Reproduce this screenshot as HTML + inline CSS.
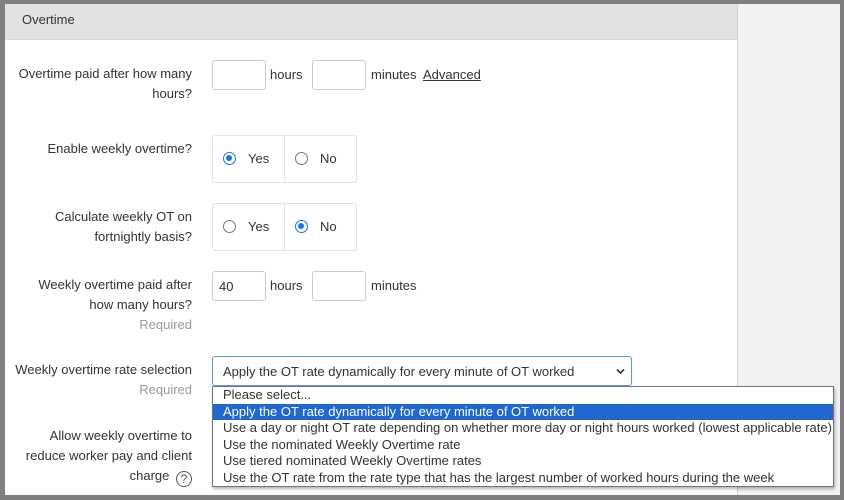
<!DOCTYPE html>
<html><head><style>
*{margin:0;padding:0;box-sizing:border-box}
body{width:844px;height:500px;background:#7f7f7f;position:relative;overflow:hidden;font-family:"Liberation Sans",Arial,sans-serif;font-size:13px;color:#333}
.main{position:absolute;left:5px;top:4px;width:732px;height:491px;background:#fff}
.side{position:absolute;left:737px;top:4px;width:103px;height:491px;background:#f1f2f4;border-left:1px solid #d0d0d0}
.hdr{position:absolute;left:5px;top:4px;width:732px;height:36px;background:#e2e2e2;border-bottom:1px solid #d8d8d8}
.hdr span{position:absolute;left:17px;top:8px;font-size:13px}
.a{position:absolute;white-space:nowrap}
.lbl{position:absolute;right:652px;text-align:right;line-height:20px}
.req{color:#999}
.in{position:absolute;width:54px;height:30px;border:1px solid #ccc;border-radius:3px;background:#fff;padding:7px 6px}
.rb{position:absolute;left:212px;width:145px;height:48px;border:1px solid #e4e4e4;border-radius:3px}
.rb .div{position:absolute;left:71px;top:0;bottom:0;border-left:1px solid #e4e4e4}
.r{position:absolute;width:13px;height:13px;border:1px solid #767676;border-radius:50%;background:#fff}
.r.on{border:1.5px solid #1a73e8}
.r.on::after{content:"";position:absolute;left:2px;top:2px;width:6px;height:6px;border-radius:50%;background:#1a73e8}
.sel{position:absolute;left:212px;top:356px;width:420px;height:30px;border:1px solid #5b9bd5;border-radius:3px;padding:7px 10px;color:#333}
.dd{position:absolute;left:212px;top:386px;width:622px;height:101px;border:1px solid #767676;background:#fff;font-size:13px;box-shadow:1px 2px 3px rgba(0,0,0,.3)}
.dd div{height:16.5px;line-height:16.5px;padding-left:10px;color:#333;white-space:nowrap}
.dd .hl{background:#1e68d0;color:#fff}
</style></head><body>
<div class="main"></div>
<div class="side"></div>
<div class="hdr"><span>Overtime</span></div>

<div class="lbl" style="top:64px">Overtime paid after how many<br>hours?</div>
<div class="in" style="left:212px;top:60px"></div>
<div class="a" style="left:270px;top:67px">hours</div>
<div class="in" style="left:312px;top:60px"></div>
<div class="a" style="left:371px;top:67px">minutes</div>
<div class="a" style="left:423px;top:67px;text-decoration:underline">Advanced</div>

<div class="lbl" style="top:139px">Enable weekly overtime?</div>
<div class="rb" style="top:135px"><div class="div"></div></div>
<div class="r on" style="left:223px;top:152px"></div><div class="a" style="left:248px;top:151px">Yes</div>
<div class="r" style="left:295px;top:152px"></div><div class="a" style="left:320px;top:151px">No</div>

<div class="lbl" style="top:207px">Calculate weekly OT on<br>fortnightly basis?</div>
<div class="rb" style="top:203px"><div class="div"></div></div>
<div class="r" style="left:223px;top:220px"></div><div class="a" style="left:248px;top:219px">Yes</div>
<div class="r on" style="left:295px;top:220px"></div><div class="a" style="left:320px;top:219px">No</div>

<div class="lbl" style="top:275px">Weekly overtime paid after<br>how many hours?<br><span class="req">Required</span></div>
<div class="in" style="left:212px;top:271px">40</div>
<div class="a" style="left:270px;top:278px">hours</div>
<div class="in" style="left:312px;top:271px"></div>
<div class="a" style="left:371px;top:278px">minutes</div>

<div class="lbl" style="top:360px">Weekly overtime rate selection<br><span class="req">Required</span></div>
<div class="sel">Apply the OT rate dynamically for every minute of OT worked
<svg style="position:absolute;right:6px;top:11px" width="9" height="7" viewBox="0 0 9 7"><path d="M1 1.5L4.5 5 8 1.5" stroke="#333" stroke-width="1.6" fill="none"/></svg></div>
<div class="dd">
<div>Please select...</div>
<div class="hl">Apply the OT rate dynamically for every minute of OT worked</div>
<div>Use a day or night OT rate depending on whether more day or night hours worked (lowest applicable rate)</div>
<div>Use the nominated Weekly Overtime rate</div>
<div>Use tiered nominated Weekly Overtime rates</div>
<div>Use the OT rate from the rate type that has the largest number of worked hours during the week</div>
</div>

<div class="lbl" style="top:426px">Allow weekly overtime to<br>reduce worker pay and client<br>charge <span style="display:inline-block;width:16px;height:16px;border:1.3px solid #555;border-radius:50%;font-size:12px;line-height:14px;text-align:center;color:#555;vertical-align:-3px;margin-left:3px">?</span></div>
</body></html>
